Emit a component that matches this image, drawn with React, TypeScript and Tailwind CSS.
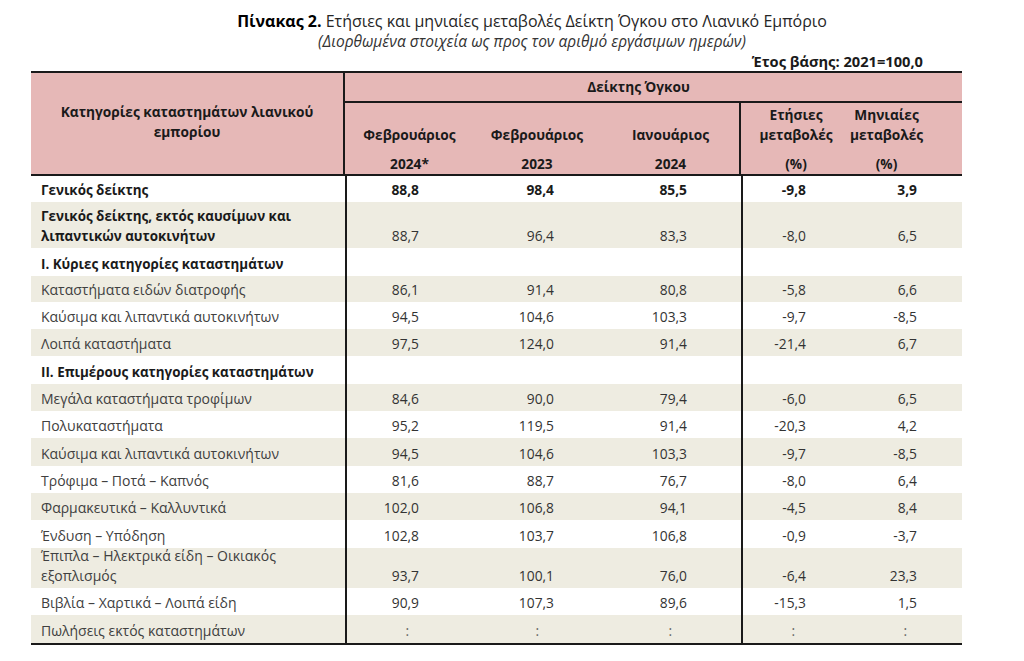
import React from "react";

type Row = {
  label: string[];
  v: string[];
  bold?: boolean;
  boldNums?: boolean;
  h: string;
};

const rows: Row[] = [
  { label: ["Γενικός δείκτης"], v: ["88,8", "98,4", "85,5", "-9,8", "3,9"], bold: true, boldNums: true, h: "h-[26px]" },
  { label: ["Γενικός δείκτης, εκτός καυσίμων και", "λιπαντικών αυτοκινήτων"], v: ["88,7", "96,4", "83,3", "-8,0", "6,5"], bold: true, h: "h-[46px]" },
  { label: ["I. Κύριες κατηγορίες καταστημάτων"], v: [], bold: true, h: "h-[28px]" },
  { label: ["Καταστήματα ειδών διατροφής"], v: ["86,1", "91,4", "80,8", "-5,8", "6,6"], h: "h-[26px]" },
  { label: ["Καύσιμα και λιπαντικά αυτοκινήτων"], v: ["94,5", "104,6", "103,3", "-9,7", "-8,5"], h: "h-[27px]" },
  { label: ["Λοιπά καταστήματα"], v: ["97,5", "124,0", "91,4", "-21,4", "6,7"], h: "h-[27px]" },
  { label: ["II. Επιμέρους κατηγορίες καταστημάτων"], v: [], bold: true, h: "h-[28px]" },
  { label: ["Μεγάλα καταστήματα τροφίμων"], v: ["84,6", "90,0", "79,4", "-6,0", "6,5"], h: "h-[27px]" },
  { label: ["Πολυκαταστήματα"], v: ["95,2", "119,5", "91,4", "-20,3", "4,2"], h: "h-[27px]" },
  { label: ["Καύσιμα και λιπαντικά αυτοκινήτων"], v: ["94,5", "104,6", "103,3", "-9,7", "-8,5"], h: "h-[28px]" },
  { label: ["Τρόφιμα – Ποτά – Καπνός"], v: ["81,6", "88,7", "76,7", "-8,0", "6,4"], h: "h-[27px]" },
  { label: ["Φαρμακευτικά – Καλλυντικά"], v: ["102,0", "106,8", "94,1", "-4,5", "8,4"], h: "h-[27px]" },
  { label: ["Ένδυση – Υπόδηση"], v: ["102,8", "103,7", "106,8", "-0,9", "-3,7"], h: "h-[28px]" },
  { label: ["Έπιπλα – Ηλεκτρικά είδη – Οικιακός", "εξοπλισμός"], v: ["93,7", "100,1", "76,0", "-6,4", "23,3"], h: "h-[40px]" },
  { label: ["Βιβλία – Χαρτικά – Λοιπά είδη"], v: ["90,9", "107,3", "89,6", "-15,3", "1,5"], h: "h-[27px]" },
  { label: ["Πωλήσεις εκτός καταστημάτων"], v: [":", ":", ":", ":", ":"], h: "h-[28px]" },
];

// column widths and right padding of the numbers
const cols = [
  "w-[123px] pr-[49px] border-l-2 border-[#1a1a1a]",
  "w-[142px] pr-[56px]",
  "w-[131px] pr-[54px]",
  "w-[110px] pr-[45px] border-l-2 border-[#1a1a1a]",
  "w-[111px] pr-[45px]",
];
const dotCols = [
  "w-[123px] pr-[59px] border-l-2 border-[#1a1a1a]",
  "w-[142px] pr-[71px]",
  "w-[131px] pr-[69px]",
  "w-[110px] pr-[56px] border-l-2 border-[#1a1a1a]",
  "w-[111px] pr-[55px]",
];

function HeadCell({ lines, extra }: { lines: string[]; extra: string }) {
  return (
    <div className={`flex flex-col items-center pt-[2px] ${extra}`}>
      <div className="h-[20px] leading-[20px]">{lines[0]}</div>
      <div className="h-[20px] leading-[20px]">{lines[1]}</div>
      <div className="mt-[9px] h-[20px] leading-[20px]">{lines[2]}</div>
    </div>
  );
}

export default function App() {
  return (
    <div className="w-[1024px] h-[661px] bg-white font-['Open_Sans',sans-serif] text-[14px] text-[#333]">
      <div className="pl-[40px] pt-[10px] text-center text-[16px] leading-[22px] text-[#262626]">
        <span className="font-bold text-black">Πίνακας 2.</span> Ετήσιες και μηνιαίες μεταβολές Δείκτη Όγκου στο Λιανικό Εμπόριο
      </div>
      <div className="pl-[40px] text-center text-[15.5px] italic leading-[18px] text-[#333]">
        (Διορθωμένα στοιχεία ως προς τον αριθμό εργάσιμων ημερών)
      </div>
      <div className="pr-[101px] pt-[1px] text-right text-[14.67px] font-bold leading-[20px] text-[#1a1a1a]">Έτος βάσης: 2021=100,0</div>

      <div className="ml-[31px] w-[931px]">
        {/* header */}
        <div className="grid grid-cols-[314px_617px] border-t-2 border-b-2 border-[#1a1a1a] bg-[#e6b8b7] text-[13.7px] font-bold text-[#1a1a1a]">
          <div className="flex flex-col items-center justify-center pb-[4px] leading-[20px] border-r-2 border-[#1a1a1a]">
            <span>Κατηγορίες καταστημάτων λιανικού</span>
            <span>εμπορίου</span>
          </div>
          <div>
            <div className="h-[30px] border-b-2 border-[#1a1a1a] pr-[30px] text-center leading-[28px]">Δείκτης Όγκου</div>
            <div className="flex h-[71px]">
              <HeadCell lines={["", "Φεβρουάριος", "2024*"]} extra="w-[121px] pl-[8px]" />
              <HeadCell lines={["", "Φεβρουάριος", "2023"]} extra="w-[142px]" />
              <HeadCell lines={["", "Ιανουάριος", "2024"]} extra="w-[131px] pr-[6px]" />
              <HeadCell lines={["Ετήσιες", "μεταβολές", "(%)"]} extra="w-[112px] border-l-2 border-[#1a1a1a]" />
              <HeadCell lines={["Μηνιαίες", "μεταβολές", "(%)"]} extra="w-[111px] pr-[40px]" />
            </div>
          </div>
        </div>

        {/* body */}
        <div className="border-b-2 border-[#1a1a1a]">
          {rows.map((r, i) => (
            <div key={i} className={`flex ${r.h} ${i % 2 === 1 ? "bg-[#eeece1]" : "bg-white"}`}>
              <div
                className={`flex w-[314px] flex-col justify-end pb-[2px] pl-[10px] leading-[20px] ${
                  r.bold ? "text-[13.4px] font-bold text-[#1a1a1a]" : "text-[#404040]"
                }`}
              >
                {r.label.map((l) => (
                  <span key={l}>{l}</span>
                ))}
              </div>
              {(r.v[0] === ":" ? dotCols : cols).map((c, j) => (
                <div
                  key={j}
                  className={`flex items-end justify-end pb-[2px] leading-[20px] text-[13.8px] ${c} ${
                    r.boldNums ? "font-bold text-[#1a1a1a]" : ""
                  } ${r.v[0] === ":" ? "text-[#666]" : ""}`}
                >
                  {r.v[j] ?? ""}
                </div>
              ))}
            </div>
          ))}
        </div>
      </div>
    </div>
  );
}
